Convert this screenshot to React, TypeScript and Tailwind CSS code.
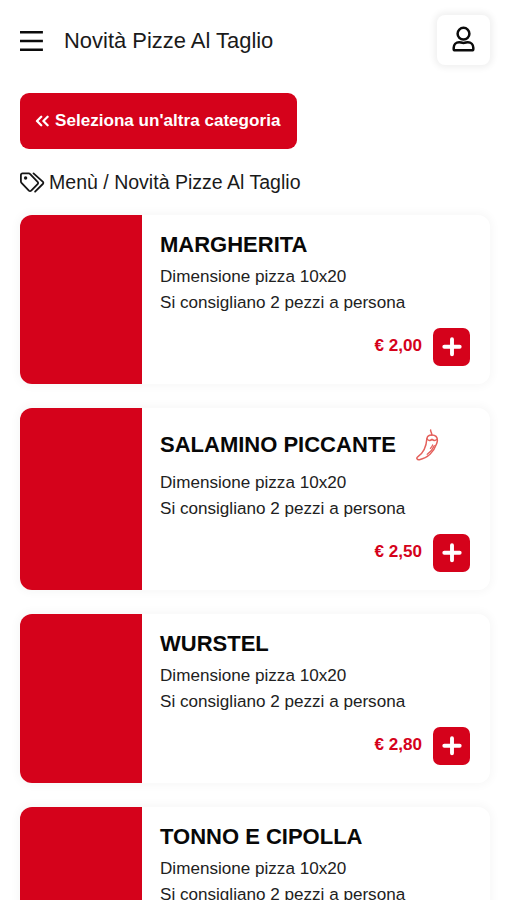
type Pizza = { name: string; price: string; spicy?: boolean };

const pizzas: Pizza[] = [
  { name: "MARGHERITA", price: "€ 2,00" },
  { name: "SALAMINO PICCANTE", price: "€ 2,50", spicy: true },
  { name: "WURSTEL", price: "€ 2,80" },
  { name: "TONNO E CIPOLLA", price: "€ 2,80" },
];

function MenuIcon() {
  return (
    <svg className="h-[22px] w-[24px] shrink-0" viewBox="0 0 24 22" stroke="#0b0b0b" strokeWidth="2.6">
      <path d="M0 2.3h22.900M0 11h22.900M0 19.7h22.900" />
    </svg>
  );
}

function UserIcon() {
  return (
    <svg className="mb-[2px] h-[26px] w-[24px]" viewBox="0 0 24 26" fill="none" stroke="#0b0b0b" strokeWidth="2.5">
      <circle cx="11.500" cy="7.7" r="5.900" />
      <path
        d="M7.200 16.200c1.500 0 2.400.7 4.300.7s2.800-.7 4.300-.7c3.300 0 5.500 2.400 5.500 5.600v1.100c0 .9-.6 1.400-1.400 1.400H3.100c-.8 0-1.400-.5-1.400-1.400v-1.100c0-3.200 2.200-5.600 5.500-5.600z"
        strokeLinejoin="round"
      />
    </svg>
  );
}

function TagsIcon() {
  return (
    <svg
      className="h-[22px] w-[25px] shrink-0"
      viewBox="0 0 25 22"
      fill="none"
      stroke="#161616"
      strokeWidth="1.8"
      strokeLinejoin="round"
    >
      <path d="M.9 3v6.300c0 .6.2 1.100.6 1.500l7.400 7.800c.7.7 1.600.7 2.300 0l6.400-6.500c.7-.7.7-1.600 0-2.300L10.200 2.100C9.800 1.600 9.300 1.400 8.700 1.400H2.500C1.600 1.400.9 2.100.9 3z" />
      <path d="M13.500 1.400l9.200 8.300c.8.700.8 1.600.1 2.300l-7.700 7.700" strokeLinecap="round" />
      <circle cx="5.600" cy="6" r="1.700" fill="#161616" stroke="none" />
    </svg>
  );
}

function ChiliIcon() {
  return (
    <svg
      className="h-[32px] w-[24px] shrink-0"
      viewBox="0 0 24 32"
      fill="none"
      stroke="#e4615c"
      strokeWidth="1.5"
      strokeLinecap="round"
      strokeLinejoin="round"
    >
      <path d="M14.600 1c-.2 1.700 1.300 2.500 1.200 5.200" />
      <path d="M10.900 9.500c.5-2.200 2.400-3.500 5-3.400 3.300.1 5.500 2 5.500 5.200 0 1.300-.4 2.400-.8 3.500-2.600 7.600-8.700 14.300-17.200 15.900-2.300.4-3.400-1.600-1.700-2.800 5-3.200 8.400-7.500 9.200-18.400z" />
      <path d="M11 9.800c1.300 1.900 3.300 2.200 5 .6 1.600 1.400 3.500 1.300 5.200-.2" />
      <path d="M18.300 16.500c-1.600 4-4.100 6.600-7.100 8.800M16.600 15.800c-.3 1.500-1.400 2.500-2.200 3.600" strokeWidth="1.200" />
    </svg>
  );
}

function PizzaCard({ name, price, spicy }: Pizza) {
  return (
    <article className="flex overflow-hidden rounded-xl bg-white shadow-[0_0_8px_3px_rgba(0,0,0,0.03)]">
      <div className="w-[122px] shrink-0 bg-[#d5021b]" />
      <div className="flex-1 py-[18px] pr-[20px] pl-[18px]">
        <div className={spicy ? "flex h-[37px] items-center gap-[20px]" : "flex h-6 items-center"}>
          <h2 className="text-[22px] leading-6 font-bold whitespace-nowrap text-[#080808]">{name}</h2>
          {spicy && <ChiliIcon />}
        </div>
        <p className="mt-[7px] text-[17.100px] leading-[25.500px] text-[#212121]">
          Dimensione pizza 10x20
          <br />
          Si consigliano 2 pezzi a persona
        </p>
        <div className="mt-[13px] flex items-center justify-end gap-[11px]">
          <span className="relative -top-px text-[17.100px] font-bold text-[#d5021b]">{price}</span>
          <button className="flex h-[38px] w-[37px] items-center justify-center rounded-[7px] bg-[#d5021b]" aria-label="Aggiungi">
            <svg className="size-[20px]" viewBox="0 0 20 20" stroke="white" strokeWidth="3.900" strokeLinecap="round">
              <path d="M10 2.300v15M2.300 9.800h15.400" />
            </svg>
          </button>
        </div>
      </div>
    </article>
  );
}

export default function App() {
  return (
    <div className="h-[900px] w-full overflow-hidden bg-white pr-[17px] pl-[20px] font-['Liberation_Sans',Arial,sans-serif]">
      <header className="flex h-[93px] items-start pt-[15px]">
        <div className="flex h-[52px] items-center gap-[20px]">
          <MenuIcon />
          <h1 className="text-[21.950px] text-[#1a1a1a]">Novità Pizze Al Taglio</h1>
        </div>
        <button
          className="ml-auto flex h-[50px] w-[53px] items-center justify-center rounded-lg bg-white shadow-[0_0_6px_3px_rgba(0,0,0,0.06)]"
          aria-label="Profilo"
        >
          <UserIcon />
        </button>
      </header>
      <button className="flex h-[56px] w-[277px] items-center rounded-[9px] bg-[#d5021b] pl-[15px] text-[17.100px] font-bold whitespace-nowrap text-white">
        <svg
          className="mr-[6px] mb-px h-[12px] w-[14px]"
          viewBox="0 0 14 12"
          fill="none"
          stroke="white"
          strokeWidth="2.300"
          strokeLinecap="round"
          strokeLinejoin="round"
        >
          <path d="M6.200 1.800L2 6l4.200 4.200M12.600 1.800L8.400 6l4.200 4.200" />
        </svg>
        Seleziona un'altra categoria
      </button>
      <nav className="flex h-[66px] items-center gap-[4px] pt-px text-[19.550px] text-[#1a1a1a]">
        <TagsIcon />
        <span className="pt-px">Menù / Novità Pizze Al Taglio</span>
      </nav>
      <main className="flex flex-col gap-6">
        {pizzas.map((p) => (
          <PizzaCard key={p.name} {...p} />
        ))}
      </main>
    </div>
  );
}
